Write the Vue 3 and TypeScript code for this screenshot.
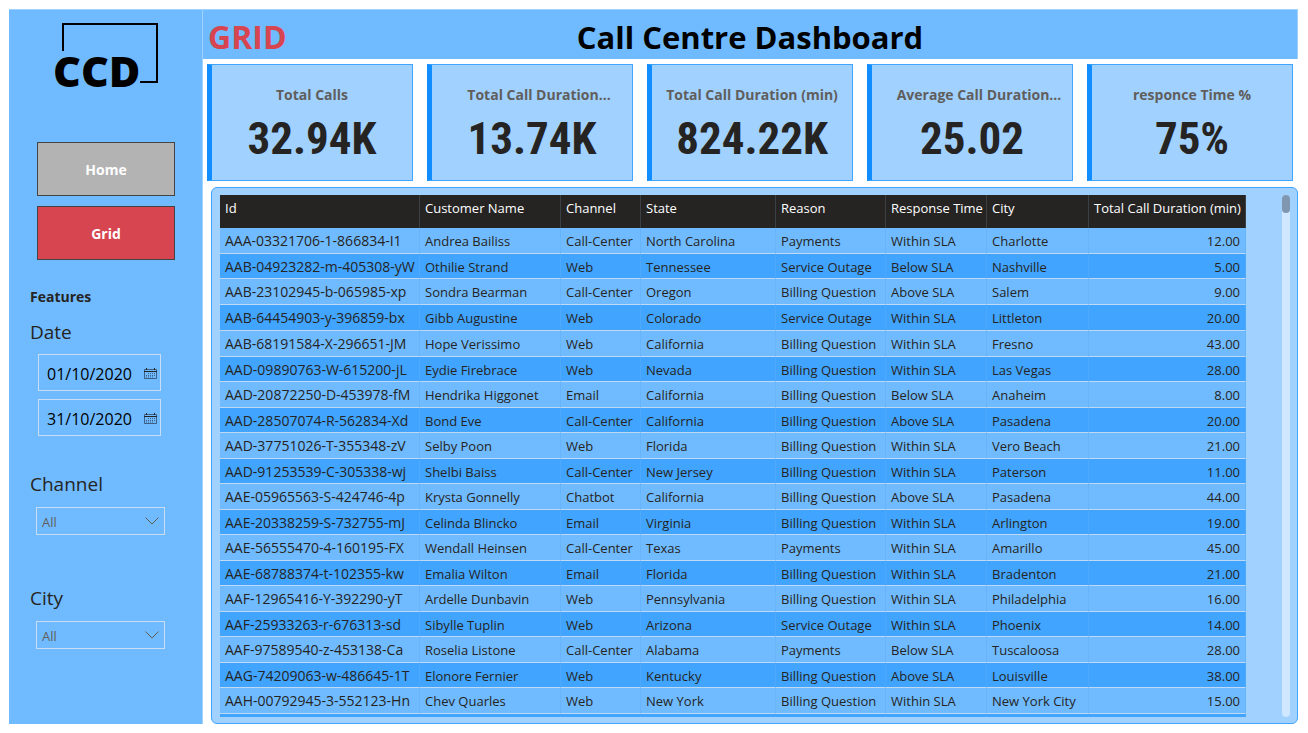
<script setup lang="ts">
import { ref } from 'vue'

interface Kpi {
  label: string
  value: string
  clipped?: boolean
}

const kpis: Kpi[] = [
  { label: 'Total Calls', value: '32.94K' },
  { label: 'Total Call Duration…', value: '13.74K', clipped: true },
  { label: 'Total Call Duration (min)', value: '824.22K' },
  { label: 'Average Call Duration…', value: '25.02', clipped: true },
  { label: 'responce Time %', value: '75%' },
]

const columns = [
  { key: 'id', title: 'Id' },
  { key: 'name', title: 'Customer Name' },
  { key: 'channel', title: 'Channel' },
  { key: 'state', title: 'State' },
  { key: 'reason', title: 'Reason' },
  { key: 'response', title: 'Response Time' },
  { key: 'city', title: 'City' },
  { key: 'duration', title: 'Total Call Duration (min)' },
]

const rows: string[][] = [
  ['AAA-03321706-1-866834-I1', 'Andrea Bailiss', 'Call-Center', 'North Carolina', 'Payments', 'Within SLA', 'Charlotte', '12.00'],
  ['AAB-04923282-m-405308-yW', 'Othilie Strand', 'Web', 'Tennessee', 'Service Outage', 'Below SLA', 'Nashville', '5.00'],
  ['AAB-23102945-b-065985-xp', 'Sondra Bearman', 'Call-Center', 'Oregon', 'Billing Question', 'Above SLA', 'Salem', '9.00'],
  ['AAB-64454903-y-396859-bx', 'Gibb Augustine', 'Web', 'Colorado', 'Service Outage', 'Within SLA', 'Littleton', '20.00'],
  ['AAB-68191584-X-296651-JM', 'Hope Verissimo', 'Web', 'California', 'Billing Question', 'Within SLA', 'Fresno', '43.00'],
  ['AAD-09890763-W-615200-jL', 'Eydie Firebrace', 'Web', 'Nevada', 'Billing Question', 'Within SLA', 'Las Vegas', '28.00'],
  ['AAD-20872250-D-453978-fM', 'Hendrika Higgonet', 'Email', 'California', 'Billing Question', 'Below SLA', 'Anaheim', '8.00'],
  ['AAD-28507074-R-562834-Xd', 'Bond Eve', 'Call-Center', 'California', 'Billing Question', 'Above SLA', 'Pasadena', '20.00'],
  ['AAD-37751026-T-355348-zV', 'Selby Poon', 'Web', 'Florida', 'Billing Question', 'Within SLA', 'Vero Beach', '21.00'],
  ['AAD-91253539-C-305338-wj', 'Shelbi Baiss', 'Call-Center', 'New Jersey', 'Billing Question', 'Within SLA', 'Paterson', '11.00'],
  ['AAE-05965563-S-424746-4p', 'Krysta Gonnelly', 'Chatbot', 'California', 'Billing Question', 'Above SLA', 'Pasadena', '44.00'],
  ['AAE-20338259-S-732755-mJ', 'Celinda Blincko', 'Email', 'Virginia', 'Billing Question', 'Within SLA', 'Arlington', '19.00'],
  ['AAE-56555470-4-160195-FX', 'Wendall Heinsen', 'Call-Center', 'Texas', 'Payments', 'Within SLA', 'Amarillo', '45.00'],
  ['AAE-68788374-t-102355-kw', 'Emalia Wilton', 'Email', 'Florida', 'Billing Question', 'Within SLA', 'Bradenton', '21.00'],
  ['AAF-12965416-Y-392290-yT', 'Ardelle Dunbavin', 'Web', 'Pennsylvania', 'Billing Question', 'Within SLA', 'Philadelphia', '16.00'],
  ['AAF-25933263-r-676313-sd', 'Sibylle Tuplin', 'Web', 'Arizona', 'Service Outage', 'Within SLA', 'Phoenix', '14.00'],
  ['AAF-97589540-z-453138-Ca', 'Roselia Listone', 'Call-Center', 'Alabama', 'Payments', 'Below SLA', 'Tuscaloosa', '28.00'],
  ['AAG-74209063-w-486645-1T', 'Elonore Fernier', 'Web', 'Kentucky', 'Billing Question', 'Above SLA', 'Louisville', '38.00'],
  ['AAH-00792945-3-552123-Hn', 'Chev Quarles', 'Web', 'New York', 'Billing Question', 'Within SLA', 'New York City', '15.00'],
  ['', '', '', '', '', '', '', ''],
]

const dates = ref([
  { id: 'date-from', name: 'Start date', value: '01/10/2020' },
  { id: 'date-to', name: 'End date', value: '31/10/2020' },
])
const channel = ref('All')
const city = ref('All')
</script>

<template>
  <div class="page">
    <aside class="sidebar">
      <svg class="logo" viewBox="0 0 108 84" role="img" aria-label="CCD">
        <path d="M10 29V2H104V60H87" fill="none" stroke="#000" stroke-width="2" />
        <text x="0" y="65" class="logo-text">CCD</text>
      </svg>

      <nav class="nav">
        <button type="button" class="nav-button">Home</button>
        <button type="button" class="nav-button active">Grid</button>
      </nav>

      <h2 class="features">Features</h2>

      <section class="dates">
        <h3 class="filter-title">Date</h3>
        <div v-for="d in dates" :key="d.id" class="date-box">
          <input :id="d.id" v-model="d.value" type="text" :aria-label="d.name" />
          <button type="button" class="calendar" :aria-label="'Pick ' + d.name.toLowerCase()">
            <svg viewBox="0 0 13 12" width="13" height="12" fill="none">
              <path d="M.5 1.5H12.5V10.5H.5Z" stroke="#3b5f86" />
              <path d="M0 3.5H13M2.5 0V2M10.5 0V2" stroke="#252423" />
              <path d="M4 5.5H11M2 7.5H11M2 9H9" stroke="#3b5f86" stroke-dasharray="1 1" />
            </svg>
          </button>
        </div>
      </section>

      <section class="filter">
        <label class="filter-title" for="channel">Channel</label>
        <div class="select-box">
          <select id="channel" v-model="channel"><option>All</option></select>
          <svg viewBox="0 0 14 8" width="14" height="8"><path d="M.5 .5L7 7L13.5 .5" fill="none" stroke="#605e5c" /></svg>
        </div>
      </section>

      <section class="filter">
        <label class="filter-title" for="city">City</label>
        <div class="select-box">
          <select id="city" v-model="city"><option>All</option></select>
          <svg viewBox="0 0 14 8" width="14" height="8"><path d="M.5 .5L7 7L13.5 .5" fill="none" stroke="#605e5c" /></svg>
        </div>
      </section>
    </aside>

    <main class="main">
      <header class="header">
        <span class="page-name">GRID</span>
        <h1>Call Centre Dashboard</h1>
      </header>

      <div class="kpis">
        <article v-for="k in kpis" :key="k.label" class="kpi">
          <h2 :class="{ clipped: k.clipped }">{{ k.label }}</h2>
          <p>{{ k.value }}</p>
        </article>
      </div>

      <section class="panel">
        <div class="scroller">
          <table>
            <colgroup>
              <col v-for="c in columns" :key="c.key" :class="'col-' + c.key" />
            </colgroup>
            <thead>
              <tr>
                <th v-for="c in columns" :key="c.key" scope="col">{{ c.title }}</th>
              </tr>
            </thead>
            <tbody>
              <tr v-for="(row, i) in rows" :key="i">
                <td v-for="(cell, j) in row" :key="j">{{ cell }}</td>
              </tr>
            </tbody>
          </table>
        </div>
        <div class="track"><div class="thumb"></div></div>
      </section>
    </main>
  </div>
</template>

<style>
body {
  margin: 0;
  background: #fff;
}
</style>

<style scoped>
.page {
  box-sizing: border-box;
  height: 100vh;
  padding: 9px 10px 9px 9px;
  display: flex;
  font-family: "Open Sans", "Noto Sans", sans-serif;
  color: #252423;
}
.page *,
.page *::before {
  box-sizing: border-box;
}
h1, h2, h3, p {
  margin: 0;
}
button, input, select {
  font-family: inherit;
}

.sidebar {
  flex: 0 0 194px;
  background: #70bbff;
  border-top: 1px solid #a0d1ff;
  border-right: 1px solid #a0d1ff;
}
.logo {
  display: block;
  width: 108px;
  height: 84px;
  margin: 12px 0 0 44px;
}
.logo-text {
  font-family: "Open Sans", "Noto Sans", sans-serif;
  font-weight: 800;
  font-size: 43px;
}
.nav {
  display: flex;
  flex-direction: column;
  gap: 10px;
  margin: 36px 27px 0 28px;
}
.nav-button {
  height: 54px;
  border: 1px solid #444;
  background: #b3b3b3;
  color: #fff;
  font-size: 14px;
  font-weight: 700;
  padding: 0;
}
.nav-button.active {
  background: #d64550;
}
.features {
  margin: 27px 0 0 21px;
  font-size: 14px;
  line-height: 20px;
  font-weight: 700;
}
.filter-title {
  display: block;
  margin-left: 21px;
  font-size: 19px;
  line-height: 26px;
  font-weight: 500;
}
.dates {
  margin-top: 12px;
}
.date-box {
  display: flex;
  align-items: center;
  width: 123px;
  height: 37px;
  margin: 8px 0 0 29px;
  border: 1px solid #c8dcf4;
}
.filter-title + .date-box {
  margin-top: 9px;
}
.date-box input {
  flex: 1;
  min-width: 0;
  padding: 2px 0 0 8px;
  border: 0;
  background: transparent;
  color: #000;
  font-size: 16px;
}
.calendar {
  display: flex;
  padding: 2px 3px 0;
  border: 0;
  background: transparent;
}
.dates + .filter {
  margin-top: 35px;
}
.filter {
  height: 114px;
}
.select-box {
  position: relative;
  width: 129px;
  height: 28px;
  margin: 10px 0 0 27px;
}
.select-box select {
  width: 100%;
  height: 100%;
  padding: 1px 0 0 5px;
  border: 1px solid #c8dcf4;
  border-radius: 0;
  appearance: none;
  background: transparent;
  color: #605e5c;
  font-size: 13px;
}
.select-box svg {
  position: absolute;
  right: 6px;
  top: 10px;
  pointer-events: none;
}

.main {
  flex: 1;
  min-width: 0;
  display: flex;
  flex-direction: column;
}
.header {
  display: grid;
  grid-template-columns: 1fr auto 1fr;
  align-items: center;
  height: 50px;
  padding: 4px 5px 0;
  flex-shrink: 0;
  background: #70bbff;
  border-top: 1px solid #a0d1ff;
  border-right: 1px solid #a0d1ff;
  font-size: 32px;
}
.page-name {
  color: #d64550;
  font-weight: 700;
}
.header h1 {
  color: #000;
  font-size: 31px;
  font-weight: 700;
}
.kpis {
  display: flex;
  gap: 14px;
  padding: 5px 5px 0 4px;
}
.kpi {
  flex: 1;
  min-width: 0;
  height: 117px;
  padding-top: 20px;
  background: #a0d1ff;
  border: 1px solid #41a4ff;
  border-left: 5px solid #118dff;
  text-align: center;
  white-space: nowrap;
}
.kpi h2 {
  color: #605e5c;
  font-size: 14px;
  line-height: 20px;
  font-weight: 700;
}
.kpi h2.clipped {
  padding-left: 14px;
}
.kpi p {
  margin-top: 6px;
  font-family: "Roboto Condensed", Roboto, sans-serif;
  font-size: 45px;
  line-height: 56px;
  font-weight: 700;
}

.panel {
  flex: 1;
  min-height: 0;
  display: flex;
  justify-content: space-between;
  margin: 6px 0 0 8px;
  padding: 7px 7px 6px 8px;
  background: #a0d1ff;
  border: 1px solid #41a4ff;
  border-radius: 6px;
}
.scroller {
  overflow: auto;
  scrollbar-width: none;
}
table {
  table-layout: fixed;
  width: 1026px;
  border-collapse: separate;
  border-spacing: 0;
  font-size: 13px;
  line-height: 18px;
  white-space: nowrap;
}
.col-id { width: 200px; }
.col-name { width: 141px; }
.col-channel { width: 80px; }
.col-state { width: 135px; }
.col-reason { width: 110px; }
.col-response { width: 101px; }
.col-city { width: 102px; }
.col-duration { width: 157px; }
th {
  position: sticky;
  top: 0;
  height: 33px;
  padding: 4px 0 0 5px;
  vertical-align: top;
  text-align: left;
  font-weight: 400;
  color: #fff;
  background: #252423;
  border-right: 1px solid #3b4046;
}
td {
  height: 26px;
  padding: 1px 0 0 5px;
  background: #70bbff;
  border-right: 1px solid #68b4fa;
  border-bottom: 1px solid #c0d9f2;
}
td:first-child {
  font-size: 14px;
}
tr:nth-child(even) td {
  height: 25px;
  background: #41a4ff;
  border-right-color: #4ea9fc;
}
tr:nth-child(4) td {
  height: 26px;
}
th:last-child,
td:last-child {
  padding-right: 5px;
  text-align: right;
}
.track {
  width: 8px;
  border-radius: 4px;
  background: #cfe7ff;
}
.thumb {
  height: 18px;
  border-radius: 4px;
  background: #8097b1;
}
</style>
